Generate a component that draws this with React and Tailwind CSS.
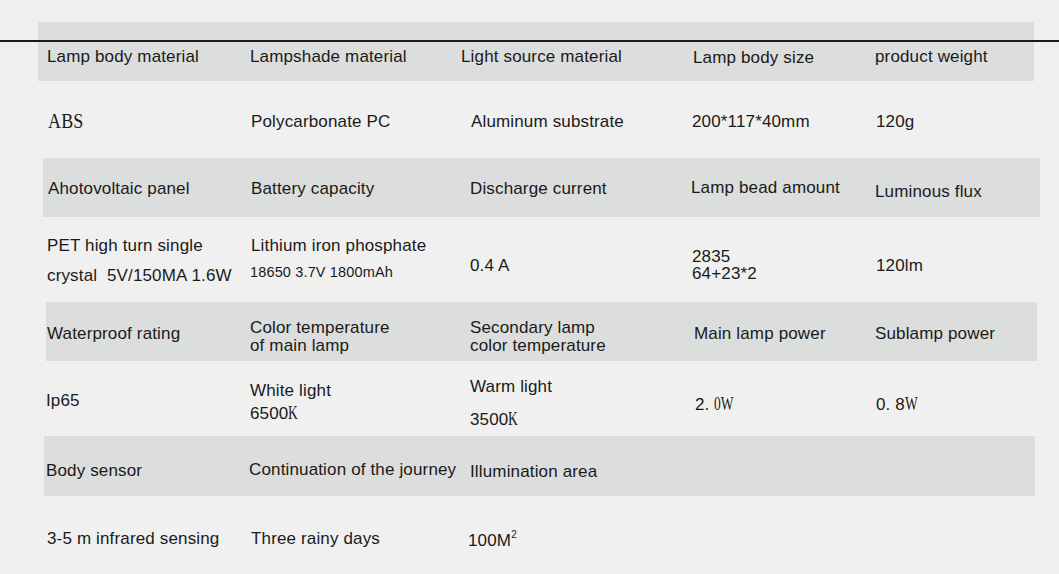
const serif = "font-['Liberation_Serif',serif]";

function Row({ band, left, right, h, children, items = "items-center" }) {
  return (
    <div
      className={`grid grid-cols-[204px_220px_223px_182px_1fr] ${items} ${band ? "bg-[#dcdddd]" : "bg-[#f0f0f0]"}`}
      style={{ height: h, marginLeft: left, width: right - left, paddingLeft: 46 - left }}
    >
      {children}
    </div>
  );
}

function Cell({ className = "", children }) {
  return <div className={`whitespace-nowrap ${className}`}>{children}</div>;
}

export default function App() {
  return (
    <div className="relative w-[1059px] h-[574px] overflow-hidden bg-[#efefef] font-['Liberation_Sans',Arial,sans-serif] text-[17px] text-[#1a1a1a] tracking-[0.15px] leading-[18px]">
      <div className="pt-[22px]">
        <Row band left={38} right={1034} h={59}>
          <Cell className="ml-[1px] mt-[10px]">Lamp body material</Cell>
          <Cell className="mt-[10px]">Lampshade material</Cell>
          <Cell className="-ml-[9px] mt-[10px]">Light source material</Cell>
          <Cell className="mt-[12px]">Lamp body size</Cell>
          <Cell className="mt-[10px]">product weight</Cell>
        </Row>
        <Row left={43} right={1032} h={77}>
          <Cell className={`${serif} ml-[2px] text-[20px] scale-x-90 origin-left mt-[2px]`}>ABS</Cell>
          <Cell className="ml-[1px] mt-[5px]">Polycarbonate PC</Cell>
          <Cell className="ml-[1px] mt-[5px]">Aluminum substrate</Cell>
          <Cell className="-ml-[1px] mt-[4px]">200*117*40mm</Cell>
          <Cell className="ml-[1px] mt-[4px]">120g</Cell>
        </Row>
        <Row band left={43} right={1040} h={59}>
          <Cell className="ml-[2px] mt-[2px]">Ahotovoltaic panel</Cell>
          <Cell className="ml-[1px] mt-[2px]">Battery capacity</Cell>
          <Cell className="mt-[2px]">Discharge current</Cell>
          <Cell className="-ml-[2px] mt-[1px]">Lamp bead amount</Cell>
          <Cell className="mt-[8px]">Luminous flux</Cell>
        </Row>
        <Row left={43} right={1040} h={85}>
          <Cell className="ml-[1px] leading-[30px] mt-[3px]">
            <div>PET high turn single</div>
            <div>crystal&nbsp; 5V/150MA 1.6W</div>
          </Cell>
          <Cell className="ml-[1px] mt-[1px]">
            <div className="leading-[24px]">Lithium iron phosphate</div>
            <div className="text-[14.5px] leading-[28px] -ml-[1px]">18650 3.7V 1800mAh</div>
          </Cell>
          <Cell className="mt-[12px]">0.4 A</Cell>
          <Cell className="-ml-[1px] leading-[17px] mt-[11px]">
            <div>2835</div>
            <div>64+23*2</div>
          </Cell>
          <Cell className="ml-[1px] mt-[12px]">120lm</Cell>
        </Row>
        <Row band left={46} right={1037} h={59}>
          <Cell className="ml-[1px] mt-[5px]">Waterproof rating</Cell>
          <Cell className="leading-[18px] mt-[11px]">
            <div>Color temperature</div>
            <div>of main lamp</div>
          </Cell>
          <Cell className="leading-[18px] mt-[11px]">
            <div>Secondary lamp</div>
            <div>color temperature</div>
          </Cell>
          <Cell className="ml-[1px] mt-[4px]">Main lamp power</Cell>
          <Cell className="mt-[4px]">Sublamp power</Cell>
        </Row>
        <Row left={46} right={1037} h={74}>
          <Cell className="mt-[4px]">Ip65</Cell>
          <Cell className="mt-[7px]">
            <div className="leading-[23px]">White light</div>
            <div className="leading-[23px]">
              6500<span className={`${serif} text-[18px] inline-block scale-x-75 origin-left`}>K</span>
            </div>
          </Cell>
          <Cell className="mt-[10px]">
            <div className="leading-[32px]">Warm light</div>
            <div className="leading-[32px]">
              3500<span className={`${serif} text-[18px] inline-block scale-x-75 origin-left`}>K</span>
            </div>
          </Cell>
          <Cell className="ml-[2px] mt-[12px]">
            2.{" "}
            <span className={`${serif} text-[18px] inline-block scale-x-75 origin-left`}>0W</span>
          </Cell>
          <Cell className="ml-[1px] mt-[12px]">
            0. 8<span className={`${serif} text-[18px] inline-block scale-x-75 origin-left`}>W</span>
          </Cell>
        </Row>
        <div className="h-[1px]" />
        <Row band left={44} right={1035} h={60}>
          <Cell className="mt-[9px]">Body sensor</Cell>
          <Cell className="-ml-[1px] mt-[7px]">Continuation of the journey</Cell>
          <Cell className="mt-[11px]">Illumination area</Cell>
          <Cell />
          <Cell />
        </Row>
        <Row left={44} right={1035} h={79}>
          <Cell className="ml-[1px] mt-[7px]">3-5 m infrared sensing</Cell>
          <Cell className="ml-[1px] mt-[7px]">Three rainy days</Cell>
          <Cell className="-ml-[2px] mt-[10px]">
            100M<sup className="text-[10px] -top-[8px]">2</sup>
          </Cell>
          <Cell />
          <Cell />
        </Row>
      </div>
      <div className="absolute left-0 top-[40px] w-full h-[2px] bg-[#1a1a1a]" />
    </div>
  );
}
